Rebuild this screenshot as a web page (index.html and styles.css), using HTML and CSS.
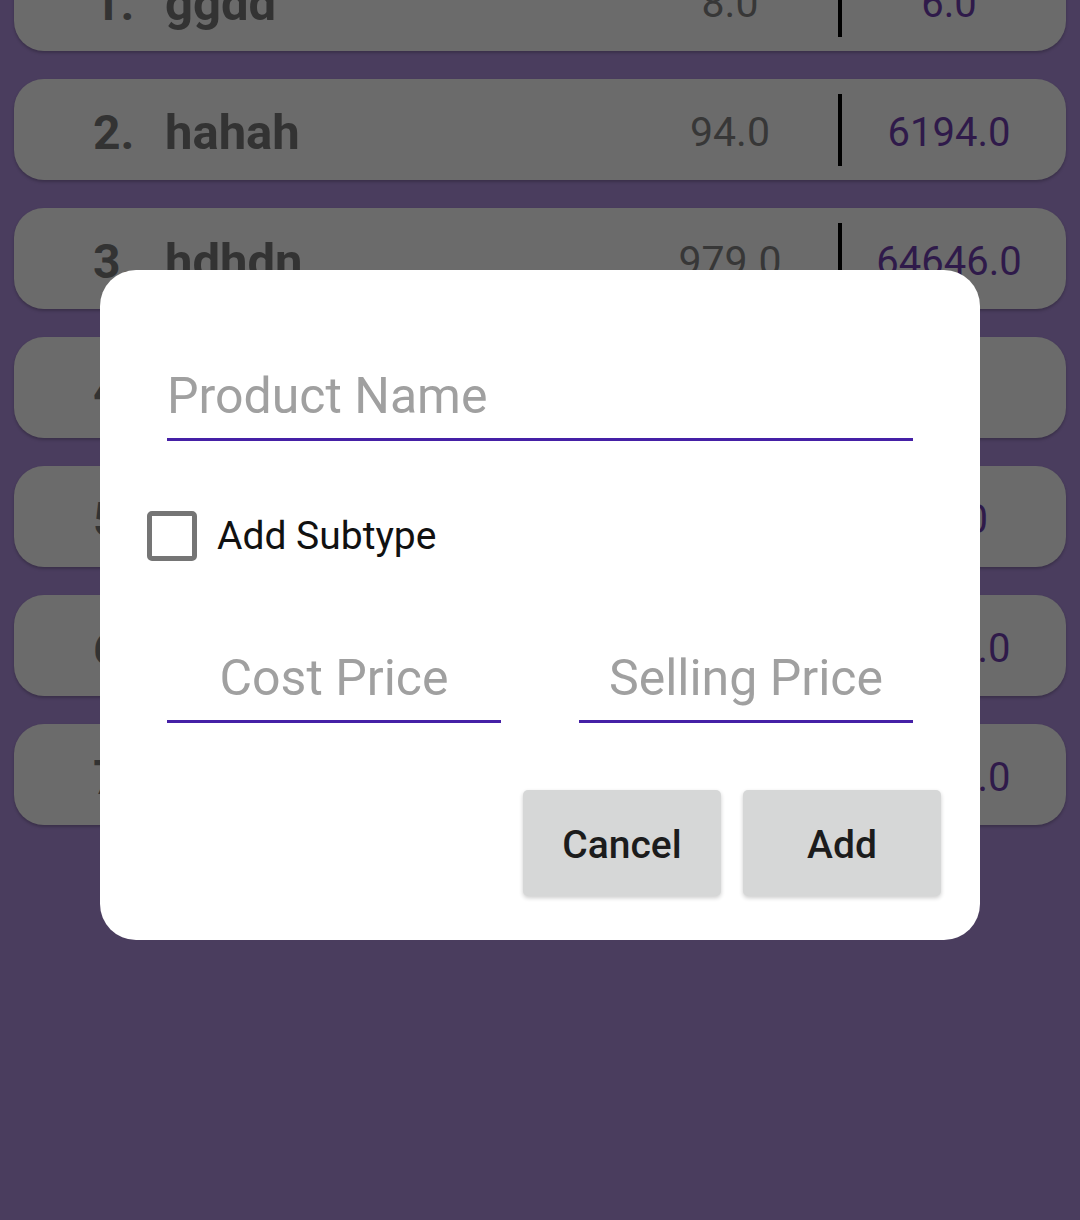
FILE: index.html
```html
<!DOCTYPE html>
<html>
<head>
<meta charset="utf-8">
<link rel="stylesheet" href="styles.css">
</head>
<body>
<div class="screen">
  <div class="list">
    <div class="card">
      <span class="idx">1.</span><span class="name">ggdd</span>
      <span class="cost">8.0</span><span class="divider"></span><span class="sell">6.0</span>
    </div>
    <div class="card">
      <span class="idx">2.</span><span class="name">hahah</span>
      <span class="cost">94.0</span><span class="divider"></span><span class="sell">6194.0</span>
    </div>
    <div class="card">
      <span class="idx">3.</span><span class="name">hdhdn</span>
      <span class="cost">979.0</span><span class="divider"></span><span class="sell">64646.0</span>
    </div>
    <div class="card">
      <span class="idx">4.</span><span class="name">jdjd</span>
      <span class="cost">5.0</span><span class="divider"></span><span class="sell">9.0</span>
    </div>
    <div class="card">
      <span class="idx">5.</span><span class="name">bsbs</span>
      <span class="cost">46.0</span><span class="divider"></span><span class="sell">64.0</span>
    </div>
    <div class="card">
      <span class="idx">6.</span><span class="name">gsgs</span>
      <span class="cost">94.0</span><span class="divider"></span><span class="sell">9464.0</span>
    </div>
    <div class="card">
      <span class="idx">7.</span><span class="name">nsns</span>
      <span class="cost">64.0</span><span class="divider"></span><span class="sell">6464.0</span>
    </div>
  </div>

  <div class="overlay">
    <div class="dialog">
      <div class="field field-full"><span class="hint">Product Name</span></div>
      <div class="check-row">
        <span class="checkbox"></span>
        <span class="check-label">Add Subtype</span>
      </div>
      <div class="price-row">
        <div class="field field-center"><span class="hint">Cost Price</span></div>
        <div class="field field-center"><span class="hint">Selling Price</span></div>
      </div>
      <div class="actions">
        <div class="btn">Cancel</div>
        <div class="btn">Add</div>
      </div>
    </div>
  </div>
</div>
</body>
</html>
```

FILE: styles.css
```css
html, body {
  margin: 0;
  padding: 0;
}
body {
  background: #4a3d5e;
  font-family: Roboto, "Noto Sans", sans-serif;
  width: 1080px;
  height: 1220px;
  overflow: hidden;
}
.screen {
  position: relative;
  width: 1080px;
  height: 1220px;
  overflow: hidden;
}
.list {
  display: flex;
  flex-direction: column;
  gap: 28px;
  padding: 0 14px;
  margin-top: -50px;
}
.card {
  height: 101px;
  box-sizing: border-box;
  background: #6b6b6b;
  border-radius: 30px;
  box-shadow: 0 2px 3px rgba(0, 0, 0, 0.22);
  display: flex;
  align-items: center;
  padding: 5px 10px 0 79px;
}
.idx {
  width: 72px;
  font-weight: 700;
  font-size: 48px;
  color: #333333;
}
.name {
  flex: 1;
  font-weight: 700;
  font-size: 49px;
  color: #333333;
}
.cost {
  width: 200px;
  text-align: center;
  font-size: 41px;
  color: #373737;
}
.divider {
  width: 4px;
  height: 72px;
  background: #000;
  margin-left: 8px;
  margin-top: -5px;
}
.sell {
  width: 214px;
  text-align: center;
  font-size: 40px;
  color: #2f1a4a;
}
.overlay {
  position: absolute;
  inset: 0;
  display: flex;
  justify-content: center;
  align-items: flex-start;
  padding-top: 270px;
}
.dialog {
  width: 880px;
  height: 670px;
  box-sizing: border-box;
  background: #ffffff;
  border-radius: 36px;
  padding: 98px 39px 0 67px;
  display: flex;
  flex-direction: column;
}
.field {
  border-bottom: 3px solid #4520a6;
  padding-bottom: 14px;
  line-height: 56px;
  height: 56px;
}
.field-full {
  margin-right: 28px;
}
.hint {
  font-size: 50px;
  color: #a0a0a0;
}
.check-row {
  display: flex;
  align-items: center;
  margin-top: 70px;
  margin-left: -20px;
  height: 50px;
}
.checkbox {
  width: 40px;
  height: 40px;
  border: 5px solid #757575;
  border-radius: 5px;
}
.check-label {
  margin-left: 20px;
  font-size: 39px;
  color: #111111;
}
.price-row {
  display: grid;
  grid-template-columns: 334px 334px;
  column-gap: 78px;
  margin-top: 89px;
}
.field-center {
  text-align: center;
}
.actions {
  display: flex;
  justify-content: flex-end;
  gap: 22px;
  margin-top: 67px;
}
.btn {
  width: 198px;
  height: 106px;
  background: #d6d7d7;
  border-radius: 5px;
  box-shadow: 0 2px 4px rgba(0, 0, 0, 0.2);
  display: flex;
  align-items: center;
  justify-content: center;
  padding-top: 3px;
  box-sizing: border-box;
  font-size: 39px;
  font-weight: 500;
  color: #1c1c1c;
}
```
